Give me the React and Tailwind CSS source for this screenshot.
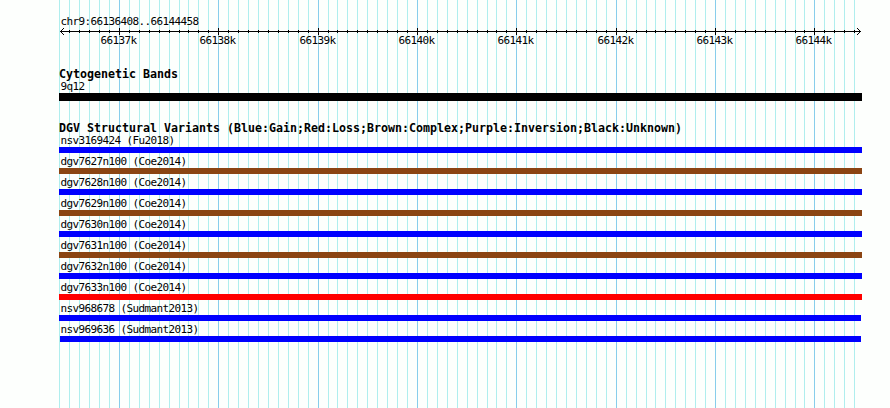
import React from 'react';

// Genome coordinate -> pixel scale
const FIRST_MAJOR = 119.405;
const STEP = 9.936;
const FIRST_K = 66137;

const ticks = [];
for (let i = -6; i <= 74; i++) {
  ticks.push({
    x: Math.floor(FIRST_MAJOR + i * STEP),
    major: i % 10 === 0 && i >= 0,
    label: `${FIRST_K + i / 10}k`,
  });
}

const variants = [
  { name: 'nsv3169424 (Fu2018)', bar: 'w-[803px] bg-[#0000ff]' },
  { name: 'dgv7627n100 (Coe2014)', bar: 'w-[803px] bg-[#8b4513]' },
  { name: 'dgv7628n100 (Coe2014)', bar: 'w-[803px] bg-[#0000ff]' },
  { name: 'dgv7629n100 (Coe2014)', bar: 'w-[803px] bg-[#8b4513]' },
  { name: 'dgv7630n100 (Coe2014)', bar: 'w-[803px] bg-[#0000ff]' },
  { name: 'dgv7631n100 (Coe2014)', bar: 'w-[803px] bg-[#8b4513]' },
  { name: 'dgv7632n100 (Coe2014)', bar: 'w-[803px] bg-[#0000ff]' },
  { name: 'dgv7633n100 (Coe2014)', bar: 'w-[803px] bg-[#ff0000]' },
  { name: 'nsv968678 (Sudmant2013)', bar: 'w-[802px] bg-[#0000ff]' },
  { name: 'nsv969636 (Sudmant2013)', bar: 'ml-px w-[801px] bg-[#0000ff]' },
];

const Grid = () => (
  <svg className="absolute inset-0" width="890" height="408" shapeRendering="crispEdges">
    {ticks.map((t) => (
      <rect key={t.x} x={t.x} y="0" width="1" height="408" fill={t.major ? '#87ceeb' : '#afeeee'} />
    ))}
  </svg>
);

const Ruler = () => (
  <svg className="block" width="890" height="19" viewBox="0 28 890 19">
    <g shapeRendering="crispEdges">
      <rect x="60" y="31" width="801" height="1" />
      {ticks.slice(1).map((t) => (
        <rect key={t.x} x={t.x} y={t.major ? 28 : 30} width="1" height={t.major ? 7 : 3} />
      ))}
      {/* arrow heads */}
      {[1, 2, 3].map((d) => (
        <g key={d}>
          <rect x={60 + d} y={31 - d} width="1" height="1" />
          <rect x={60 + d} y={31 + d} width="1" height="1" />
          <rect x={860 - d} y={31 - d} width="1" height="1" />
          <rect x={860 - d} y={31 + d} width="1" height="1" />
        </g>
      ))}
    </g>
    {ticks.filter((t) => t.major).map((t) => (
      <text key={t.x} x={t.x - 18.6} y="44">{t.label}</text>
    ))}
  </svg>
);

const TrackTitle = ({ children }) => (
  <h2 className="h-3 text-[11.63px] font-bold leading-[13px] tracking-[0]">{children}</h2>
);

const Feature = ({ name, children }) => (
  <div>
    <div className="h-[13px] pl-[1.4px]">{name}</div>
    {children}
  </div>
);

const App = () => {
  return (
    <div className="relative h-[408px] w-[890px] overflow-hidden bg-[#fdfffd] font-['DejaVu_Sans_Mono',monospace] text-[11px] leading-[13px] tracking-[-0.622px] whitespace-pre text-black">
      <Grid />
      <div className="relative pt-[15px]">
        <div className="h-[13px] pl-[60.4px]">chr9:66136408..66144458</div>
        <Ruler />
        <div className="pt-[21px] pl-[59px]">
          <TrackTitle>Cytogenetic Bands</TrackTitle>
          <Feature name="9q12">
            <div className="h-2 w-[803px] bg-black" />
          </Feature>
        </div>
        <div className="pt-[21px] pl-[59px]">
          <TrackTitle>DGV Structural Variants (Blue:Gain;Red:Loss;Brown:Complex;Purple:Inversion;Black:Unknown)</TrackTitle>
          <div className="flex flex-col gap-0.5">
            {variants.map((v) => (
              <Feature key={v.name} name={v.name}>
                <div className={`h-1.5 ${v.bar}`} />
              </Feature>
            ))}
          </div>
        </div>
      </div>
    </div>
  );
};

export default App;
